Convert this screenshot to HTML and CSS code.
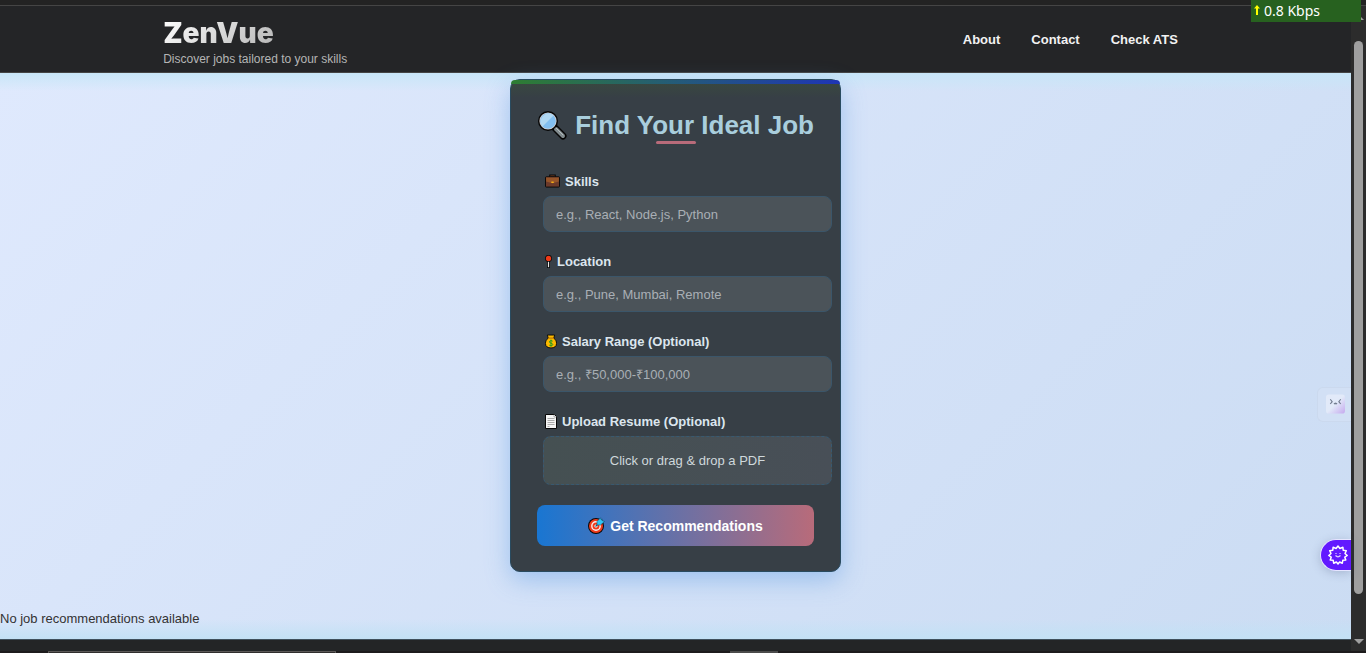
FILE: index.html
```html
<!DOCTYPE html>
<html lang="en">
<head>
<meta charset="utf-8">
<meta name="viewport" content="width=device-width, initial-scale=1">
<title>ZenVue</title>
<link rel="stylesheet" href="styles.css">
</head>
<body>
<div class="window-top"></div>
<div class="viewport">
  <div class="page">
    <header class="site-header">
      <div class="header-inner">
        <div class="brand">
          <h1 class="logo">ZenVue</h1>
          <p class="tagline">Discover jobs tailored to your skills</p>
        </div>
        <nav class="nav">
          <a href="#about">About</a>
          <a href="#contact">Contact</a>
          <a href="#ats">Check ATS</a>
        </nav>
      </div>
    </header>
    <main class="main">
      <form class="card">
        <h2 class="title">
          <svg class="title-icon" viewBox="0 0 30 30" aria-hidden="true">
            <path d="M18 18L26 26" stroke="#050505" stroke-width="7" stroke-linecap="round"/>
            <path d="M19 19L26 26" stroke="#808a8d" stroke-width="4" stroke-linecap="round"/>
            <path d="M19 18L26 25" stroke="#b3bcbe" stroke-width="1" stroke-linecap="round"/>
            <circle cx="11" cy="11" r="10" fill="#050505"/>
            <circle cx="11" cy="11" r="8.6" fill="#d8d2d2"/>
            <circle cx="11" cy="11" r="7.8" fill="#83bff0"/>
            <path d="M5.5 16.5A7.8 7.8 0 0 1 16.5 5.5Z" fill="#b0d8f3"/>
          </svg>
          <span>Find Your Ideal Job</span>
        </h2>
        <div class="fields">
          <div class="field">
            <label for="skills">
              <svg class="icon-case" viewBox="0 0 16 14" aria-hidden="true">
                <path d="M5.5 3V1h5v2" fill="none" stroke="#080808" stroke-width="2"/>
                <path d="M5.8 2.6V1.5h4.4v1.1" fill="none" stroke="#6b3a20" stroke-width="1"/>
                <rect x=".5" y="2.5" width="15" height="11" rx="1" fill="#6b3a2a" stroke="#080808"/>
                <path d="M1.2 3.2h13.6v4.3L8 9.5 1.2 7.5z" fill="#96552a"/>
                <rect x="6.5" y="7.4" width="3" height="1.8" rx=".8" fill="#f3ad15"/>
              </svg>
              Skills</label>
            <input id="skills" type="text" placeholder="e.g., React, Node.js, Python">
          </div>
          <div class="field">
            <label for="location">
              <svg class="icon-pin" viewBox="0 0 8 15" aria-hidden="true">
                <rect x="2.3" y="6" width="3.4" height="9" rx="1" fill="#080808"/>
                <rect x="3.3" y="6" width="1.4" height="8" fill="#e5e5e5"/>
                <circle cx="4" cy="4" r="3.9" fill="#080808"/>
                <circle cx="4" cy="4" r="3" fill="#f03a17"/>
              </svg>
              Location</label>
            <input id="location" type="text" placeholder="e.g., Pune, Mumbai, Remote">
          </div>
          <div class="field">
            <label for="salary">
              <svg class="icon-bag" viewBox="0 0 13 15" aria-hidden="true">
                <path d="M2.5.5h8l-1 3.3C11.700 5.500 12.500 7.500 12.500 9.700c0 3.300-2.500 4.800-6 4.800s-6-1.500-6-4.800c0-2.200.8-4.200 3-5.900z" fill="#fdb900" stroke="#080808"/>
                <path d="M3.200 3.800h6.600" stroke="#a96500" stroke-width="1"/>
                <path d="M8.300 7.200C7.500 6.300 4.800 6.300 4.800 8s3.600 1 3.600 2.700-2.900 1.700-3.800.7M6.500 5.500v7.500" fill="none" stroke="#159a22" stroke-width="1"/>
              </svg>
              Salary Range (Optional)</label>
            <input id="salary" type="text" placeholder="e.g., ₹50,000-₹100,000">
          </div>
          <div class="field">
            <label for="resume">
              <svg class="icon-doc" viewBox="0 0 12 15" aria-hidden="true">
                <path d="M.5.5H9.500L11.500 2.500V14.500H.5z" fill="#f5f5f5" stroke="#080808"/>
                <path d="M9 .8V3H11.200" fill="none" stroke="#999" stroke-width=".8"/>
                <path d="M2.500 4.500h7M2.500 6.500h7M2.500 8.500h7M2.500 10.500h7M2.500 12.500h2" stroke="#aaa"/>
              </svg>
              Upload Resume (Optional)</label>
            <label class="drop" for="resume">Click or drag &amp; drop a PDF</label>
            <input class="file-input" id="resume" type="file" accept="application/pdf">
          </div>
        </div>
        <button class="submit" type="submit">
          <svg class="icon-target" viewBox="0 0 17 17" aria-hidden="true">
            <circle cx="8" cy="9" r="8" fill="#080808"/>
            <circle cx="8" cy="9" r="7" fill="#ef3b1b"/>
            <circle cx="8" cy="9" r="4.200" fill="#ef3b1b" stroke="#f7eeee" stroke-width="1.400"/>
            <circle cx="8" cy="9" r="1.600" fill="#fff"/>
            <path d="M7.500 9.500L10 7" stroke="#075e82" stroke-width="1.200"/>
            <path d="M9 8V4.500L12.500.8l.8 2.200 1-.8v1.500l2.200.8L12.500 8z" fill="#32c5f4" stroke="#0a4055" stroke-width=".5"/>
          </svg>
          Get Recommendations
        </button>
      </form>
      <p class="empty">No job recommendations available</p>
    </main>
    <footer class="site-footer"></footer>
    <button class="helper" type="button" aria-label="Open helper">
      <svg viewBox="0 0 20 20" aria-hidden="true">
        <defs><linearGradient id="face" x1="0" y1="0" x2="1" y2="1"><stop offset=".5" stop-color="#e2eaf9"/><stop offset="1" stop-color="#c5a8ee"/></linearGradient></defs>
        <rect width="20" height="20" rx="3" fill="url(#face)"/>
        <path d="M4.500 5L6.500 7.500 4.500 10M15.500 5L13.500 7.500 15.500 10M8.500 9q.7 1.500 1.500.2q.8 1.300 1.500-.2" fill="none" stroke="#737d90" stroke-width="1.200"/>
      </svg>
    </button>
    <button class="assistant" type="button" aria-label="Open assistant">
      <svg viewBox="0 0 20 20" aria-hidden="true">
        <path d="M8.100 3.500L10 1 11.900 3.500 14.900 2.300 15.200 5.300 18.300 5.700 17 8.500 19.200 10.500 16.800 12.200 17.800 15 14.800 15.300 14.300 18.200 11.600 17 10 19 8.400 17 5.700 18.200 5.200 15.300 2.200 15 3.200 12.200.8 10.500 3 8.500 1.700 5.700 4.800 5.300 5.100 2.300z" fill="none" stroke="#fff" stroke-width="1.500" stroke-linejoin="round"/>
        <path d="M8 8v1M12 8v1M7.500 10.500q2.500 2.600 5 0" fill="none" stroke="#dfcfff" stroke-width="1.200"/>
      </svg>
    </button>
  </div>
  <div class="scrollbar" aria-hidden="true">
    <span class="arrow-up"></span>
    <span class="thumb"></span>
    <span class="arrow-down"></span>
  </div>
</div>
<div class="taskbar"><span class="task-search"></span><span class="task-active"></span></div>
<div class="netspeed"><svg viewBox="0 0 6 10" aria-hidden="true"><path d="M3 0L6 3.500H4V10H2V3.500H0z" fill="#ff0"/></svg>0.8 Kbps</div>
</body>
</html>
```
FILE: styles.css
```css
* { box-sizing: border-box; }

body {
  margin: 0;
  min-height: 100vh;
  display: flex;
  flex-direction: column;
  background: #242527;
  font-family: "Liberation Sans", Arial, sans-serif;
  font-size: 13px;
  color: #333;
}

h1, h2, p { margin: 0; }
svg { display: block; flex: none; }
button { font-family: inherit; cursor: pointer; }

.window-top {
  height: 6px;
  background: #232323;
  border-bottom: 1px solid #454545;
}

.viewport { flex: 1; display: flex; }

.page {
  position: relative;
  flex: 1;
  display: flex;
  flex-direction: column;
}

.site-header {
  background: #242527;
  border-bottom: 1px solid #454545;
}

.header-inner {
  width: 76%;
  margin: 0 auto;
  padding: 11px 11px 4px 1px;
  display: flex;
  justify-content: space-between;
  align-items: center;
}

.logo {
  width: max-content;
  font-family: Inter, sans-serif;
  font-size: 28px;
  line-height: 33px;
  font-weight: 900;
  background: linear-gradient(135deg, #fff, #b5b5b5);
  background-clip: text;
  -webkit-background-clip: text;
  color: transparent;
}

.tagline {
  font-size: 12px;
  line-height: 18px;
  color: #b5b5b5;
}

.nav { display: flex; gap: 31px; padding-bottom: 7px; }

.nav a {
  color: #f2f2f2;
  font-size: 13px;
  font-weight: 700;
  text-decoration: none;
}

.main {
  flex: 1;
  padding-top: 6px;
  background:
    linear-gradient(#c8e6f8, transparent 18px),
    linear-gradient(to top, #c3e1f5, transparent 20px),
    linear-gradient(135deg, #dfe9fd, #cbdcf3);
}

.card {
  position: relative;
  width: 331px;
  margin: 0 auto;
  padding: 30px 26px 25px;
  border: 1px solid #294b60;
  border-radius: 10px;
  background: linear-gradient(#39493f, transparent 18px), #373f46;
  box-shadow: 0 8px 24px rgba(75, 145, 225, .4);
}

.card::before {
  content: "";
  position: absolute;
  inset: 0 0 auto;
  height: 4px;
  border-radius: 9px 9px 0 0;
  background: linear-gradient(90deg, #2e7d32, #245b78 50%, #1e35b5);
}

.title {
  position: relative;
  display: flex;
  align-items: center;
  justify-content: flex-end;
  gap: 8px;
  margin-bottom: 32px;
  font-size: 26px;
  line-height: 30px;
  font-weight: 700;
  color: #a9cedd;
  white-space: nowrap;
}

.title::after {
  content: "";
  position: absolute;
  left: 50%;
  bottom: -4px;
  width: 40px;
  height: 3px;
  margin-left: -20px;
  border-radius: 2px;
  background: #b86b7a;
}

.title-icon { width: 30px; height: 30px; }

.fields {
  display: grid;
  gap: 20px;
  margin: 0 -18px 20px 6px;
}

.field label:first-child {
  display: flex;
  align-items: center;
  gap: 5px;
  height: 18px;
  margin-bottom: 6px;
  padding-left: 2px;
  font-weight: 700;
  color: #dce6ee;
}

.icon-case { width: 15px; height: 14px; }
.icon-pin { width: 7px; height: 15px; }
.icon-bag { width: 12px; height: 15px; }
.icon-doc { width: 12px; height: 15px; }
.icon-target { width: 17px; height: 17px; }

.field input[type="text"] {
  display: block;
  width: 100%;
  height: 36px;
  padding: 0 12px;
  border: 1px solid #3b566a;
  border-radius: 8px;
  background: #4b5359;
  color: #fff;
  font: 13px "Liberation Sans", Arial, sans-serif;
}

.field input::placeholder { color: #a9afb5; opacity: 1; }

.drop {
  display: flex;
  align-items: center;
  justify-content: center;
  height: 49px;
  border: 1px dashed #385970;
  border-radius: 8px;
  background: linear-gradient(90deg, #455052, #484f57);
  color: #cfd8dc;
  cursor: pointer;
}

.file-input {
  position: absolute;
  width: 1px;
  height: 1px;
  opacity: 0;
}

.submit {
  display: flex;
  align-items: center;
  justify-content: center;
  gap: 5px;
  width: 100%;
  height: 41px;
  padding: 0;
  border: 0;
  border-radius: 8px;
  background: linear-gradient(90deg, #1976d2, #b86b7a);
  color: #fff;
  font-size: 14px;
  font-weight: 700;
}

.empty { padding: 38px 0 12px; line-height: 17px; }

.site-footer {
  height: 12px;
  background: #232526;
  border-top: 1px solid #40515d;
}

.helper {
  position: absolute;
  right: 0;
  top: 381px;
  padding: 6px 6px 7px 8px;
  border: 1px solid #cbd9ee;
  border-right: 0;
  border-radius: 6px 0 0 6px;
  background: #d2e0f5;
}

.helper svg { width: 19px; height: 20px; }

.assistant {
  position: absolute;
  right: 0;
  top: 533px;
  padding: 5px 3px 5px 7px;
  border: 1px solid #e6e6ff;
  border-right: 0;
  border-radius: 16px 0 0 16px;
  background: #6219ff;
  box-shadow: 0 2px 10px rgba(60, 70, 110, .25);
}

.assistant svg { width: 20px; height: 20px; }

.scrollbar {
  width: 15px;
  padding: 9px 0 7px;
  display: flex;
  flex-direction: column;
  align-items: center;
  background: #2c2c2c;
}

.arrow-up, .arrow-down {
  border: 5px solid transparent;
}

.arrow-up { border-top: 0; border-bottom-color: #9f9f9f; }
.arrow-down { border-bottom: 0; border-top-color: #9f9f9f; }

.thumb {
  flex: 1;
  width: 9px;
  margin: 21px 0 45px;
  border-radius: 5px;
  background: #9f9f9f;
}

.taskbar {
  display: flex;
  height: 2px;
  padding-left: 48px;
  background: #1d1b1c;
}

.task-search {
  width: 288px;
  background: #302e2d;
  border: 1px solid #5b5857;
  border-bottom: 0;
}

.task-active { width: 48px; margin-left: 394px; background: #4b4b4b; }

.netspeed {
  position: absolute;
  top: 0;
  right: 5px;
  width: 110px;
  height: 22px;
  padding: 0 0 2px 3px;
  display: flex;
  align-items: center;
  gap: 4px;
  background: #27611f;
  color: #fff;
  font: 14px "Noto Sans", sans-serif;
}

.netspeed svg { width: 6px; height: 10px; }
```
